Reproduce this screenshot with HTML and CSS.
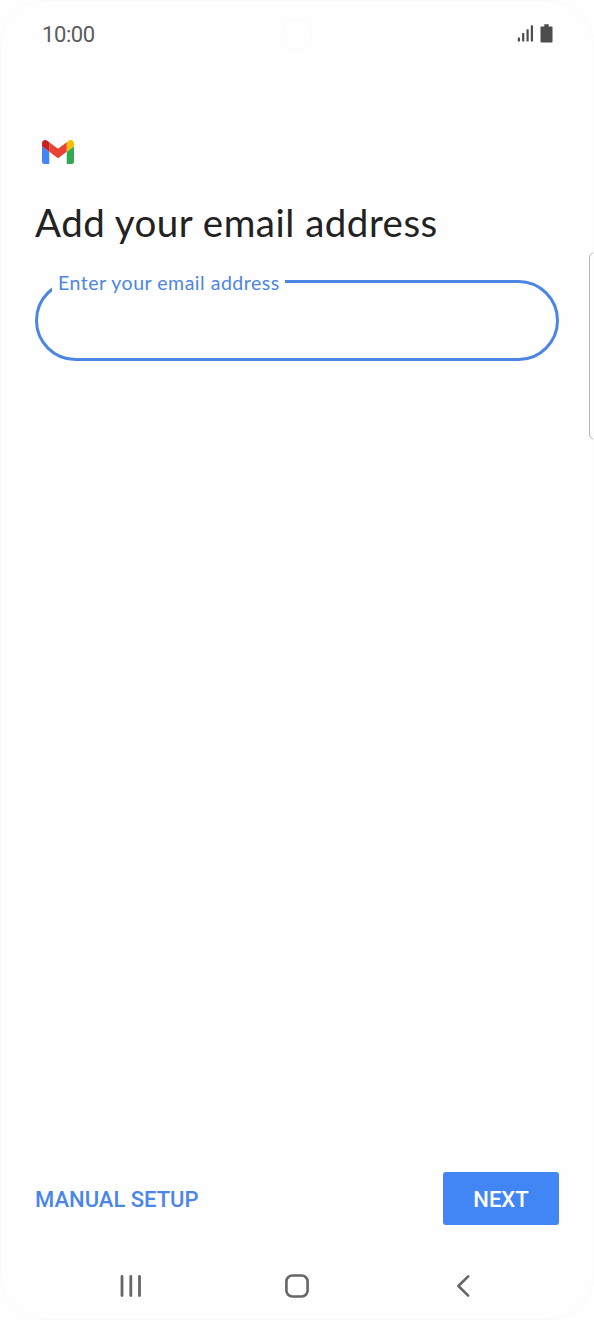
FILE: index.html
```html
<!DOCTYPE html>
<html lang="en">
<head>
<meta charset="utf-8">
<title>Add your email address</title>
<link rel="stylesheet" href="styles.css">
</head>
<body>
<div class="phone">
  <header class="status">
    <time class="clock">10:00</time>
    <span class="camera"></span>
    <svg class="indicators" width="38" height="22" viewBox="0 0 38 22" fill="#4d4d4d">
      <rect x=".8" y="14.5" width="2.2" height="4" rx=".5"/>
      <rect x="5.1" y="10" width="2.2" height="8.5" rx=".5"/>
      <rect x="9.5" y="6.2" width="2.2" height="12.3" rx=".5"/>
      <rect x="13.8" y="2.3" width="2.2" height="16.2" rx=".5"/>
      <path d="M27.3 1.2h4.4v2.3h3.1q.7 0 .7.7v14.6q0 .7-.7.7H24.2q-.7 0-.7-.7V4.2q0-.7.7-.7h3.1z"/>
    </svg>
  </header>
  <main class="content">
    <svg class="logo" width="32" height="24" viewBox="52 42 88 66">
      <path fill="#4285f4" d="M58 108h14V74L52 59v43c0 3.32 2.69 6 6 6"/>
      <path fill="#34a853" d="M120 108h14c3.32 0 6-2.69 6-6V59l-20 15"/>
      <path fill="#fbbc04" d="M120 48v26l20-15v-8c0-7.42-8.47-11.65-14.4-7.2"/>
      <path fill="#ea4335" d="M72 74V48l24 18 24-18v26L96 92"/>
      <path fill="#c5221f" d="M52 51v8l20 15V48l-5.6-4.2c-5.94-4.45-14.4-.22-14.4 7.2"/>
    </svg>
    <h1 class="title">Add your email address</h1>
    <div class="field">
      <label class="field-label" for="email">Enter your email address</label>
      <input class="field-input" id="email" type="email">
    </div>
  </main>
  <footer class="actions">
    <button class="btn text-btn">MANUAL SETUP</button>
    <button class="btn next-btn">NEXT</button>
  </footer>
  <nav class="navbar">
    <svg width="24" height="24" viewBox="0 0 24 24" stroke="#666" stroke-width="2.8" stroke-linecap="round"><path d="M3 2.4v19.2M11.8 2.4v19.2M20.5 2.4v19.2"/></svg>
    <svg width="24" height="24" viewBox="0 0 24 24" fill="none" stroke="#666" stroke-width="2.6"><rect x="1.4" y="1.5" width="21.2" height="21" rx="6"/></svg>
    <svg width="24" height="24" viewBox="0 0 24 24" fill="none" stroke="#666" stroke-width="2.6" stroke-linecap="round" stroke-linejoin="round"><path d="M17.2 2.4 7.4 12l9.8 9.6"/></svg>
  </nav>
  <span class="edge-handle"></span>
</div>
</body>
</html>
```
FILE: styles.css
```css
* { box-sizing: border-box; }
body { margin: 0; background: #fefefe; font-family: Roboto, sans-serif; }
svg { display: block; }
.phone {
  position: relative;
  display: flex;
  flex-direction: column;
  width: 594px;
  height: 1320px;
  border: 1px solid #fafafa;
  border-radius: 46px;
  background: #fefefe;
  overflow: hidden;
}
.status {
  display: grid;
  grid-template-columns: 1fr 32px 1fr;
  align-items: center;
  height: 66px;
  padding: 0 38px 0 41px;
}
.clock { font-size: 22px; line-height: 26px; color: #5c5c5c; letter-spacing: -.4px; padding-top: 2px; }
.camera { width: 31px; height: 31px; margin-left: -2px; border: 1px solid #fafafa; border-radius: 50%; }
.indicators { justify-self: end; }
.content { flex: 1; padding: 73px 34px 0; }
.logo { margin-left: 7px; }
.title {
  margin: 34px 0 0;
  font: 400 38.5px/48px Lato, sans-serif;
  letter-spacing: .5px;
  color: #222;
  white-space: nowrap;
}
.field { position: relative; height: 81px; margin-top: 34px; }
.field-input {
  display: block;
  width: 524px;
  height: 81px;
  padding: 0 24px;
  border: 3px solid #4c86e2;
  border-radius: 41px;
  background: transparent;
  font: 20px Lato, sans-serif;
  outline: none;
}
.field-label {
  position: absolute;
  left: 17px;
  top: -10px;
  width: 233px;
  padding-left: 6px;
  background: #fefefe;
  font: 400 19.5px/26px Lato, sans-serif;
  letter-spacing: .52px;
  color: #4c86e2;
  white-space: nowrap;
}
.actions {
  display: flex;
  justify-content: space-between;
  align-items: center;
  height: 53px;
  padding: 0 34px;
}
.btn { border: 0; padding: 0; font: 500 22px/26px Roboto, sans-serif; }
.text-btn { background: none; color: #4a86e8; padding-top: 2px; }
.next-btn { width: 116px; height: 53px; padding-top: 2px; border-radius: 3px; background: #4285f4; color: #fff; }
.navbar {
  display: flex;
  justify-content: space-between;
  height: 94px;
  padding: 49px 118px 0;
}
.edge-handle {
  position: absolute;
  left: 588px;
  top: 251px;
  width: 12px;
  height: 188px;
  border: 1px solid #b4b4b4;
  border-radius: 7px;
}
```
